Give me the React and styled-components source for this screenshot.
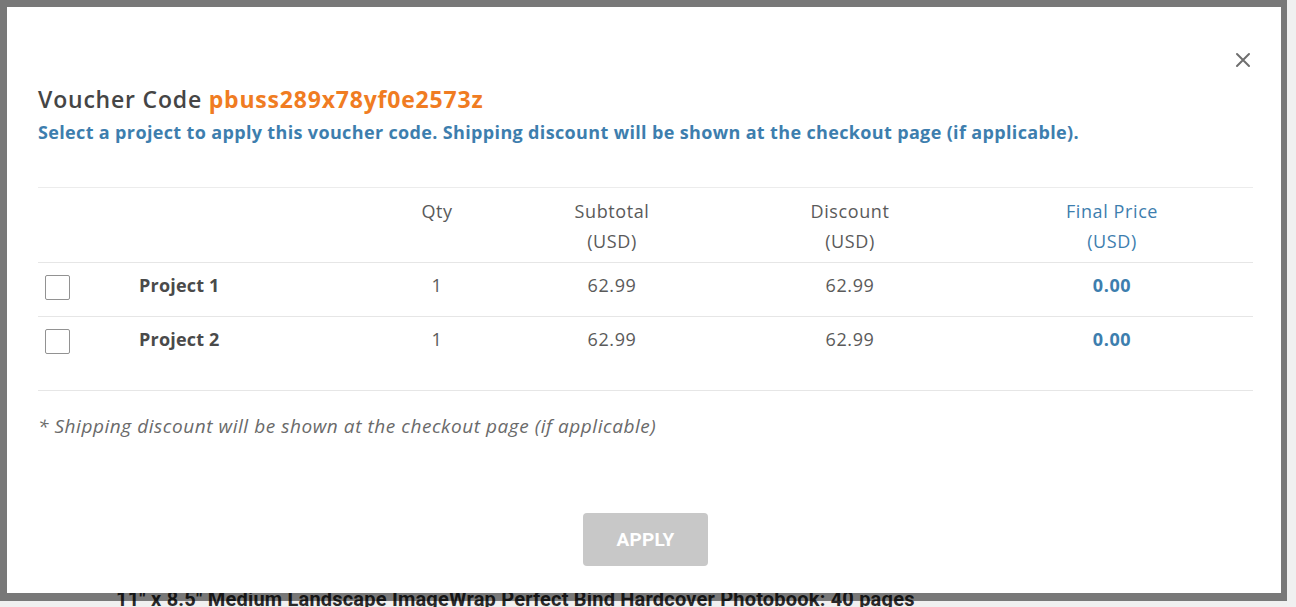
import React from 'react';
import styled, { createGlobalStyle } from 'styled-components';

const GlobalStyle = createGlobalStyle`
	html, body {
		margin: 0;
		padding: 0;
		background: #efefef;
		font-family: "Open Sans", Lato, sans-serif;
	}
`;

const Screen = styled.div`
	position: relative;
	width: 1296px;
	height: 607px;
	overflow: hidden;
	background: #f0f0f0;
`;

const PageBehind = styled.div`
	position: absolute;
	left: 116px;
	top: 587px;
	font-family: Roboto, sans-serif;
	font-size: 20px;
	font-weight: 700;
	letter-spacing: 0.2px;
	color: #2a2a2a;
	white-space: nowrap;
`;

const Backdrop = styled.div`
	position: relative;
	width: 1287px;
	padding: 7px 6px 8px 7px;
	box-sizing: border-box;
	background: rgba(0, 0, 0, 0.5);
`;

const Modal = styled.div`
	background: #ffffff;
	height: 586px;
	padding: 45px 28px 0 31px;
	box-sizing: border-box;
	display: flex;
	flex-direction: column;
`;

const CloseRow = styled.div`
	display: flex;
	justify-content: flex-end;
	height: 16px;
`;

const CloseButton = styled.button`
	border: none;
	background: none;
	padding: 0;
	margin-right: 2px;
	width: 16px;
	height: 16px;
	cursor: pointer;
	display: flex;
`;

const Title = styled.h3`
	margin: 17px 0 0;
	font-size: 23px;
	line-height: 28px;
	font-weight: 600;
	letter-spacing: 0.8px;
	color: #454545;
`;

const Code = styled.span`
	color: #f07c22;
	font-weight: 700;
`;

const Subtitle = styled.p`
	margin: 8px 0 0;
	font-size: 18px;
	line-height: 22px;
	font-weight: 700;
	letter-spacing: 0.35px;
	color: #3d7eae;
`;

const Table = styled.div`
	margin-top: 44px;
	border-top: 1px solid #ececec;
	border-bottom: 1px solid #e6e6e6;
	padding-bottom: 20px;
`;

const Row = styled.div`
	display: grid;
	grid-template-columns: 101px 223px 150px 200px 276px 248px 1fr;
	align-items: start;
	box-sizing: border-box;
	height: ${(p) => (p.$head ? '75px' : p.$last ? '53px' : '54px')};
	padding-top: ${(p) => (p.$head ? '8px' : '10px')};
	border-bottom: ${(p) => (p.$last ? 'none' : '1px solid #e6e6e6')};
	font-size: 18px;
	letter-spacing: 0.6px;
	line-height: ${(p) => (p.$head ? '30px' : '24px')};
	color: #5a5a5a;
`;

const Cell = styled.div`
	text-align: center;
	color: ${(p) => (p.$blue ? '#3d7eae' : 'inherit')};
	font-weight: ${(p) => (p.$strong ? 700 : 400)};
`;

const Name = styled.div`
	font-weight: 700;
	letter-spacing: 0.2px;
	color: #4a4a4a;
`;

const Check = styled.input.attrs({ type: 'checkbox' })`
	appearance: none;
	margin: 2px 0 0 7px;
	width: 25px;
	height: 25px;
	border: 1px solid #929292;
	border-radius: 2px;
	background: #fff;
	box-sizing: border-box;
`;

const Note = styled.p`
	margin: 24px 0 0;
	font-size: 19px;
	line-height: 22px;
	font-style: italic;
	letter-spacing: 0.55px;
	color: #6a6a6a;
`;

const Footer = styled.div`
	display: flex;
	justify-content: center;
	margin-top: 76px;
`;

const ApplyButton = styled.button`
	width: 125px;
	height: 53px;
	border: none;
	border-radius: 4px;
	background: #c8c8c8;
	color: #ffffff;
	font-family: Roboto, sans-serif;
	font-size: 19px;
	font-weight: 700;
	letter-spacing: 0.2px;
`;

const projects = [
	{ name: 'Project 1', qty: 1, subtotal: '62.99', discount: '62.99', final: '0.00' },
	{ name: 'Project 2', qty: 1, subtotal: '62.99', discount: '62.99', final: '0.00' },
];

export default function App() {
	return (
		<Screen>
			<GlobalStyle />
			<PageBehind>11" x 8.5" Medium Landscape ImageWrap Perfect Bind Hardcover Photobook: 40 pages</PageBehind>
			<Backdrop>
				<Modal>
					<CloseRow>
						<CloseButton aria-label="close">
							<svg width="16" height="16" viewBox="0 0 16 16">
								<path d="M2 2L14 14M14 2L2 14" stroke="#6f6f6f" strokeWidth="2" strokeLinecap="round" />
							</svg>
						</CloseButton>
					</CloseRow>
					<Title>
						Voucher Code <Code>pbuss289x78yf0e2573z</Code>
					</Title>
					<Subtitle>
						Select a project to apply this voucher code. Shipping discount will be shown at the checkout page (if applicable).
					</Subtitle>
					<Table>
						<Row $head>
							<div />
							<div />
							<Cell>Qty</Cell>
							<Cell>Subtotal<br />(USD)</Cell>
							<Cell>Discount<br />(USD)</Cell>
							<Cell $blue>Final Price<br />(USD)</Cell>
						</Row>
						{projects.map((p, i) => (
							<Row key={p.name} $last={i === projects.length - 1}>
								<Check />
								<Name>{p.name}</Name>
								<Cell>{p.qty}</Cell>
								<Cell>{p.subtotal}</Cell>
								<Cell>{p.discount}</Cell>
								<Cell $blue $strong>{p.final}</Cell>
							</Row>
						))}
					</Table>
					<Note>* Shipping discount will be shown at the checkout page (if applicable)</Note>
					<Footer>
						<ApplyButton>APPLY</ApplyButton>
					</Footer>
				</Modal>
			</Backdrop>
		</Screen>
	);
}
